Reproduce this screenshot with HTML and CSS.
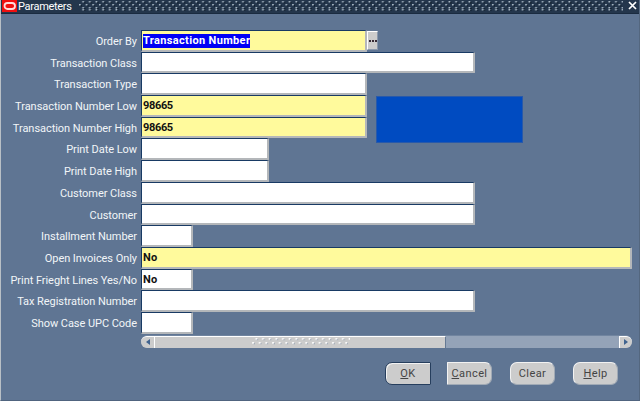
FILE: index.html
```html
<!DOCTYPE html>
<html lang="en">
<head>
<meta charset="utf-8">
<title>Parameters</title>
<link rel="stylesheet" href="styles.css">
</head>
<body>
<div class="window">
  <header class="titlebar">
    <svg class="logo" viewBox="0 0 15 12"><rect width="15" height="12" fill="#f00f0f"/><rect x="2.5" y="3" width="10.5" height="6" rx="3" fill="none" stroke="#ffdcdc" stroke-width="1.8"/></svg>
    <h1>Parameters</h1>
    <svg class="grip"><defs><pattern id="dots" width="6.66" height="8" patternUnits="userSpaceOnUse"><path d="M3.3 0h1.7v1.5H3.3zM0 3h1.7v1.5H0zM3.3 6h1.7v1.5H3.3z" fill="#a9b8c5"/><path d="M5 1.3h1.2v1.2H5zM1.6 4.3h1.2v1.2H1.6zM5 7h1.2v1H5z" fill="#071421"/></pattern></defs><rect width="100%" height="10" fill="url(#dots)"/></svg>
    <svg class="close" viewBox="0 0 9 9"><path d="M1 1l7 7M8 1L1 8" stroke="#fff" stroke-width="1.7"/></svg>
  </header>
  <main class="form">
    <div class="row"><label>Order By</label><div class="field medium required"><span class="selected">Transaction Number</span></div><button class="lov"><i></i><i></i><i></i></button></div>
    <div class="row"><label>Transaction Class</label><div class="field long"></div></div>
    <div class="row"><label>Transaction Type</label><div class="field medium"></div></div>
    <div class="row"><label>Transaction Number Low</label><div class="field medium required number">98665</div></div>
    <div class="row"><label>Transaction Number High</label><div class="field medium required number">98665</div></div>
    <div class="row"><label>Print Date Low</label><div class="field date"></div></div>
    <div class="row"><label>Print Date High</label><div class="field date"></div></div>
    <div class="row"><label>Customer Class</label><div class="field long"></div></div>
    <div class="row"><label>Customer</label><div class="field long"></div></div>
    <div class="row"><label>Installment Number</label><div class="field short"></div></div>
    <div class="row"><label>Open Invoices Only</label><div class="field full required">No</div></div>
    <div class="row"><label>Print Frieght Lines Yes/No</label><div class="field short">No</div></div>
    <div class="row"><label>Tax Registration Number</label><div class="field long"></div></div>
    <div class="row"><label>Show Case UPC Code</label><div class="field short"></div></div>
    <div class="notice"></div>
  </main>
  <div class="scrollbar">
    <div class="arrow left"><svg viewBox="0 0 4 6"><path d="M4 0v6L0 3z"/></svg></div>
    <div class="thumb"><svg class="thumb-grip"><defs><pattern id="bumps" width="6.66" height="8" patternUnits="userSpaceOnUse"><path d="M3.5 0h1.7v1.7H3.5zM.2 4h1.7v1.7H.2z" fill="#fff"/><path d="M5 1.2h1v1H5zM1.7 5.2h1v1h-1z" fill="#8595aa"/></pattern></defs><rect width="100%" height="8" fill="url(#bumps)"/></svg></div>
    <div class="arrow right"><svg viewBox="0 0 4 6"><path d="M0 0v6l4-3z"/></svg></div>
  </div>
  <footer class="buttons">
    <button class="default"><u>O</u>K</button>
    <button class="cancel"><u>C</u>ancel</button>
    <button>Clear</button>
    <button><u>H</u>elp</button>
  </footer>
</div>
</body>
</html>
```
FILE: styles.css
```css
* { box-sizing: border-box; }
body { margin: 0; overflow: hidden; font-family: Roboto, "Liberation Sans", sans-serif; }
.window { width: 640px; height: 401px; background: #5f7593; border-left: 1px solid #b9c0c6; border-right: 1px solid #54677f; border-bottom: 1px solid #50647f; }
.titlebar { height: 14px; display: flex; background: #24364c; border-bottom: 1px solid #1a2b40; }
.logo { width: 15px; height: 12px; margin-left: 1px; }
h1 { margin: 0 0 0 1px; width: 61px; font-size: 11px; line-height: 13px; font-weight: 400; letter-spacing: -.3px; color: #fff; }
.grip { width: 544px; height: 10px; margin-top: 1px; }
.close { width: 9px; height: 9px; margin: 1px 2px 0 auto; }
.form { position: relative; padding-top: 16px; height: 320.5px; }
.row { display: flex; height: 21.7px; }
.row label { width: 136px; margin-right: 4px; text-align: right; font-size: 11px; line-height: 23px; letter-spacing: -.05px; white-space: nowrap; color: #f2f5f8; }
.field { height: 21.7px; border: 1px solid #183a64; border-right: 2px solid #b4b7ba; border-bottom: 2px solid #b4b7ba; border-radius: 1px; background: #fff; padding-left: 1px; font-size: 11px; line-height: 20px; font-weight: 700; letter-spacing: .35px; color: #111; white-space: nowrap; }
.required { background: #fffa9c; }
.medium { width: 226px; }
.long { width: 334px; }
.date { width: 128px; }
.short { width: 52px; }
.full { width: 491px; }
.number { letter-spacing: -.35px; }
.selected { display: inline-block; height: 14px; line-height: 14px; background: #0000f5; color: #fff; }
.lov { width: 11px; height: 19px; margin: 1px 0 0 0; padding: 0; border: 1px solid #8998ac; border-top-color: #fff; border-left-color: #fff; background: #ccc; display: flex; justify-content: center; align-items: center; gap: 1px; }
.lov i { width: 2px; height: 2px; background: #362a35; }
.notice { position: absolute; left: 375px; top: 82px; width: 147px; height: 47px; background: #004bc1; border: 1px solid #2859aa; }
.scrollbar { width: 491px; height: 13px; margin-left: 140px; display: flex; background: #94a3b8; border-radius: 7px; border-top: 1px solid #7185a0; }
.arrow { width: 13px; background: #ccc; display: flex; align-items: center; justify-content: center; border-top: 1px solid #fff; }
.arrow svg { width: 4px; height: 6px; fill: #40638f; }
.left { border-radius: 7px 0 0 7px; }
.right { margin-left: auto; border-left: 1px solid #fff; border-radius: 0 7px 7px 0; }
.thumb { width: 292px; background: #ccc; border-top: 1px solid #fff; border-left: 1px solid #fff; border-right: 1px solid #657993; }
.thumb-grip { display: block; width: 98px; height: 8px; margin: 1px 0 0 97px; }
.buttons { display: flex; justify-content: flex-end; gap: 18px; padding: 14px 21px 0 0; }
.buttons button { width: 45px; height: 23px; padding: 1px 0 0; border: 1px solid #a1aab5; border-top-color: #f2f2f2; border-left-color: #f2f2f2; border-radius: 7px; background: #ccc; color: #444; font: 11px Roboto, "Liberation Sans", sans-serif; letter-spacing: .4px; }
.buttons .default { width: 46px; margin-right: -2px; border-color: #263e5d; box-shadow: inset 1px 1px #f2f2f2; border-radius: 7px 1px 1px 7px; }
.buttons .cancel { border-radius: 1px 7px 7px 1px; }
```
